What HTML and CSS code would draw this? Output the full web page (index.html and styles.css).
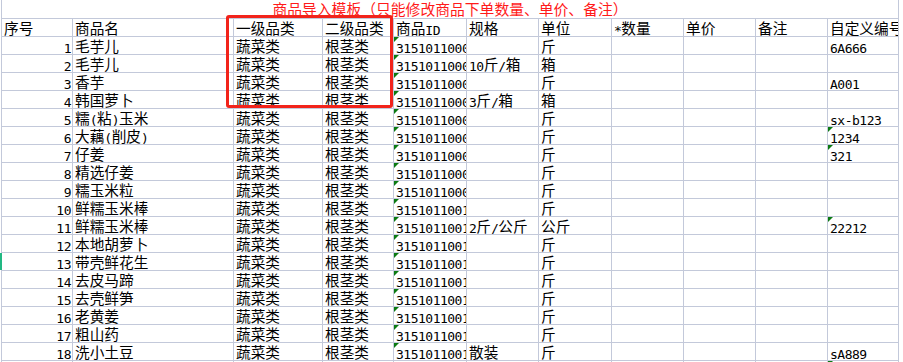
FILE: index.html
```html
<!DOCTYPE html>
<html lang="zh-CN">
<head>
<meta charset="utf-8">
<title>商品导入模板</title>
<link rel="stylesheet" href="styles.css">
</head>
<body>
<div class="wrap">
  <div class="sheet">
    <div class="c title">商品导入模板（只能修改商品下单数量、单价、备注）</div>

    <div class="c">序号</div><div class="c">商品名</div><div class="c">一级品类</div><div class="c">二级品类</div><div class="c">商品<span class="m">ID</span></div><div class="c">规格</div><div class="c">单位</div><div class="c"><span class="m">*</span>数量</div><div class="c">单价</div><div class="c">备注</div><div class="c">自定义编号</div>

    <div class="c r"><span class="m">1</span></div><div class="c">毛芋儿</div><div class="c">蔬菜类</div><div class="c">根茎类</div><div class="c g"><span class="m">31510110001</span></div><div class="c"></div><div class="c">斤</div><div class="c"></div><div class="c"></div><div class="c"></div><div class="c"><span class="m">6A666</span></div>

    <div class="c r"><span class="m">2</span></div><div class="c">毛芋儿</div><div class="c">蔬菜类</div><div class="c">根茎类</div><div class="c g"><span class="m">31510110002</span></div><div class="c"><span class="m">10</span>斤<span class="m">/</span>箱</div><div class="c">箱</div><div class="c"></div><div class="c"></div><div class="c"></div><div class="c"></div>

    <div class="c r"><span class="m">3</span></div><div class="c">香芋</div><div class="c">蔬菜类</div><div class="c">根茎类</div><div class="c g"><span class="m">31510110003</span></div><div class="c"></div><div class="c">斤</div><div class="c"></div><div class="c"></div><div class="c"></div><div class="c"><span class="m">A001</span></div>

    <div class="c r"><span class="m">4</span></div><div class="c">韩国萝卜</div><div class="c">蔬菜类</div><div class="c">根茎类</div><div class="c g"><span class="m">31510110004</span></div><div class="c"><span class="m">3</span>斤<span class="m">/</span>箱</div><div class="c">箱</div><div class="c"></div><div class="c"></div><div class="c"></div><div class="c"></div>

    <div class="c r"><span class="m">5</span></div><div class="c">糯<span class="m">(</span>粘<span class="m">)</span>玉米</div><div class="c">蔬菜类</div><div class="c">根茎类</div><div class="c g"><span class="m">31510110005</span></div><div class="c"></div><div class="c">斤</div><div class="c"></div><div class="c"></div><div class="c"></div><div class="c"><span class="m">sx-b123</span></div>

    <div class="c r"><span class="m">6</span></div><div class="c">大藕<span class="m">(</span>削皮<span class="m">)</span></div><div class="c">蔬菜类</div><div class="c">根茎类</div><div class="c g"><span class="m">31510110006</span></div><div class="c"></div><div class="c">斤</div><div class="c"></div><div class="c"></div><div class="c"></div><div class="c g"><span class="m">1234</span></div>

    <div class="c r"><span class="m">7</span></div><div class="c">仔姜</div><div class="c">蔬菜类</div><div class="c">根茎类</div><div class="c g"><span class="m">31510110007</span></div><div class="c"></div><div class="c">斤</div><div class="c"></div><div class="c"></div><div class="c"></div><div class="c g"><span class="m">321</span></div>

    <div class="c r"><span class="m">8</span></div><div class="c">精选仔姜</div><div class="c">蔬菜类</div><div class="c">根茎类</div><div class="c g"><span class="m">31510110008</span></div><div class="c"></div><div class="c">斤</div><div class="c"></div><div class="c"></div><div class="c"></div><div class="c"></div>

    <div class="c r"><span class="m">9</span></div><div class="c">糯玉米粒</div><div class="c">蔬菜类</div><div class="c">根茎类</div><div class="c g"><span class="m">31510110009</span></div><div class="c"></div><div class="c">斤</div><div class="c"></div><div class="c"></div><div class="c"></div><div class="c"></div>

    <div class="c r"><span class="m">10</span></div><div class="c">鲜糯玉米棒</div><div class="c">蔬菜类</div><div class="c">根茎类</div><div class="c g"><span class="m">31510110010</span></div><div class="c"></div><div class="c">斤</div><div class="c"></div><div class="c"></div><div class="c"></div><div class="c"></div>

    <div class="c r"><span class="m">11</span></div><div class="c">鲜糯玉米棒</div><div class="c">蔬菜类</div><div class="c">根茎类</div><div class="c g"><span class="m">31510110011</span></div><div class="c"><span class="m">2</span>斤<span class="m">/</span>公斤</div><div class="c">公斤</div><div class="c"></div><div class="c"></div><div class="c"></div><div class="c g"><span class="m">22212</span></div>

    <div class="c r"><span class="m">12</span></div><div class="c">本地胡萝卜</div><div class="c">蔬菜类</div><div class="c">根茎类</div><div class="c g"><span class="m">31510110012</span></div><div class="c"></div><div class="c">斤</div><div class="c"></div><div class="c"></div><div class="c"></div><div class="c"></div>

    <div class="c r sel"><span class="m">13</span></div><div class="c">带壳鲜花生</div><div class="c">蔬菜类</div><div class="c">根茎类</div><div class="c g"><span class="m">31510110013</span></div><div class="c"></div><div class="c">斤</div><div class="c"></div><div class="c"></div><div class="c"></div><div class="c"></div>

    <div class="c r"><span class="m">14</span></div><div class="c">去皮马蹄</div><div class="c">蔬菜类</div><div class="c">根茎类</div><div class="c g"><span class="m">31510110014</span></div><div class="c"></div><div class="c">斤</div><div class="c"></div><div class="c"></div><div class="c"></div><div class="c"></div>

    <div class="c r"><span class="m">15</span></div><div class="c">去壳鲜笋</div><div class="c">蔬菜类</div><div class="c">根茎类</div><div class="c g"><span class="m">31510110015</span></div><div class="c"></div><div class="c">斤</div><div class="c"></div><div class="c"></div><div class="c"></div><div class="c"></div>

    <div class="c r"><span class="m">16</span></div><div class="c">老黄姜</div><div class="c">蔬菜类</div><div class="c">根茎类</div><div class="c g"><span class="m">31510110016</span></div><div class="c"></div><div class="c">斤</div><div class="c"></div><div class="c"></div><div class="c"></div><div class="c"></div>

    <div class="c r"><span class="m">17</span></div><div class="c">粗山药</div><div class="c">蔬菜类</div><div class="c">根茎类</div><div class="c g"><span class="m">31510110017</span></div><div class="c"></div><div class="c">斤</div><div class="c"></div><div class="c"></div><div class="c"></div><div class="c"></div>

    <div class="c r"><span class="m">18</span></div><div class="c">洗小土豆</div><div class="c">蔬菜类</div><div class="c">根茎类</div><div class="c g"><span class="m">31510110018</span></div><div class="c">散装</div><div class="c">斤</div><div class="c"></div><div class="c"></div><div class="c"></div><div class="c"><span class="m">sA889</span></div>

    <div class="c"></div><div class="c"></div><div class="c"></div><div class="c"></div><div class="c"></div><div class="c"></div><div class="c"></div><div class="c"></div><div class="c"></div><div class="c"></div><div class="c g"></div>
  </div>
  <div class="hl"></div>
</div>
</body>
</html>
```

FILE: styles.css
```css
html, body {
  margin: 0;
  padding: 0;
  background: #ffffff;
  overflow: hidden;
}

body {
  font-family: "Noto Sans CJK SC", "Noto Sans CJK JP", sans-serif;
  font-size: 14.67px;
  color: #000000;
  text-spacing-trim: space-all;
}

.wrap {
  position: relative;
  width: 903px;
  height: 362px;
}

.sheet {
  margin-left: 1px;
  display: grid;
  grid-template-columns: 70px 160px 88px 70px 72px 71px 72px 71px 71px 71px 70px;
  grid-template-rows: 18px;
  grid-auto-rows: 17px;
  gap: 1px;
  padding: 0 1px;
  width: fit-content;
  background: #c3c9da;
}

.c {
  position: relative;
  background: #ffffff;
  line-height: 17px;
  padding: 0 2px;
  white-space: nowrap;
  overflow: hidden;
}

.title {
  grid-column: 1 / -1;
  line-height: 18px;
  text-align: center;
  color: #ff1a1a;
  font-size: 14.8px;
}

.r {
  text-align: right;
  padding-right: 1px;
}

.m {
  font-family: "DejaVu Sans Mono", monospace;
  font-size: 13px;
  letter-spacing: -0.5px;
  line-height: 1;
  vertical-align: -1px;
}

.g::before {
  content: "";
  position: absolute;
  left: 0;
  top: 0;
  border-top: 5px solid #0b7a12;
  border-right: 5px solid transparent;
}

.sel {
  box-shadow: -2px 0 0 0 #22b883;
}

.hl {
  position: absolute;
  left: 226px;
  top: 15px;
  width: 167px;
  height: 93px;
  box-sizing: border-box;
  border: 3px solid #f2231b;
  border-radius: 3px;
}
```
